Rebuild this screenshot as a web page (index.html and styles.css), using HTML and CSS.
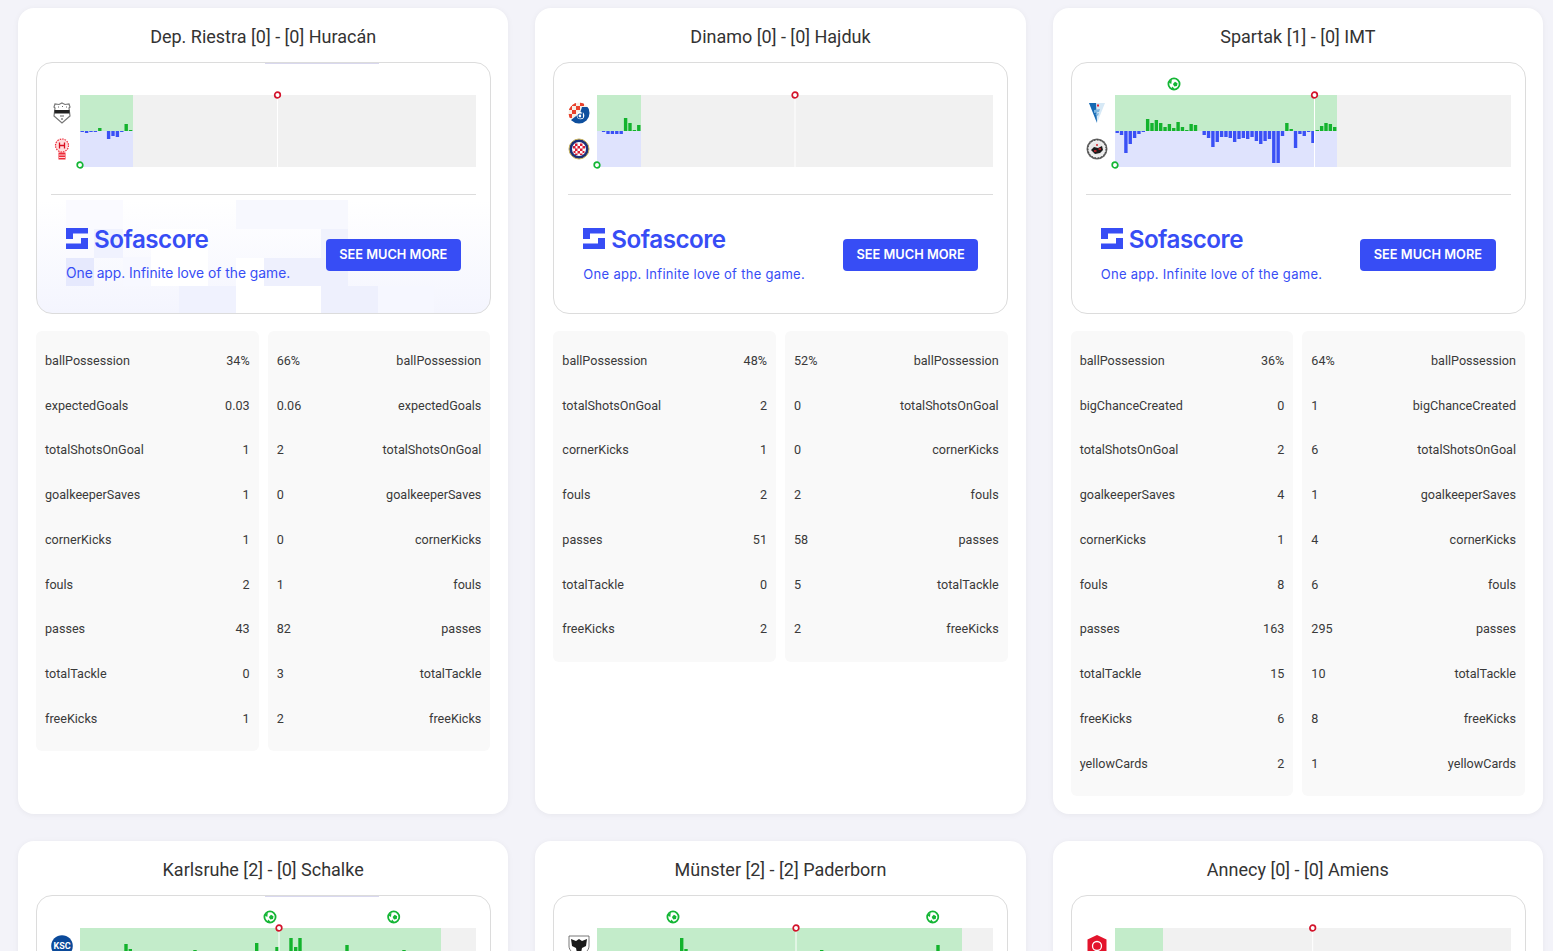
FILE: index.html
```html
<!DOCTYPE html>
<html lang="en">
<head>
  <meta charset="UTF-8" />
  <title>Live matches</title>
  <link rel="stylesheet" href="styles.css">
</head>
<body>
  <svg class="defs" width="0" height="0">
    <symbol id="ball" viewBox="0 0 14 14">
      <circle cx="7" cy="7" r="5.600" fill="#fff" stroke="#14b635" stroke-width="1.800"/>
      <path d="M8 4.800l2.500 1.400-.5 2.900-2.700.5-1.400-2.500z" fill="#14b635"/>
      <path d="M1.800 5.500l2.500 1.500.5-4.500zM4 12l1.500-2.500 2 2.500z" fill="#14b635"/>
    </symbol>
    <symbol id="logo" viewBox="0 0 22 21">
      <path d="M0 0h22v5.500H7V11H0zM22 10v11H0v-5.500h15V10z" fill="#374df5"/>
    </symbol>
    <clipPath id="dinamo-clip"><circle cx="11" cy="11" r="10.500"/></clipPath>
  </svg>

  <main class="page">
    <!-- Dep. Riestra -->
    <article class="card">
      <h2 class="title">Dep. Riestra [0] - [0] Huracán</h2>
      <section class="widget widget-tinted">
        <svg class="tiles" width="455" height="252" viewBox="0 0 455 252">
          <rect x="29" y="137" width="57" height="57" fill="#fafaff"/>
          <rect x="57" y="166" width="29" height="29" fill="#f0f2fe"/>
          <rect x="29" y="195" width="28" height="28" fill="#e6e9fd"/>
          <rect x="86" y="194" width="28" height="29" fill="#f7f8ff"/>
          <rect x="114" y="166" width="57" height="57" fill="#fff"/>
          <rect x="142" y="223" width="57" height="29" fill="#f0f2fe"/>
          <rect x="199" y="195" width="28" height="28" fill="#fff"/>
          <rect x="199" y="223" width="85" height="29" fill="#fff"/>
          <rect x="199" y="137" width="112" height="29" fill="#f7f8fe"/>
          <rect x="227" y="195" width="84" height="28" fill="#eef0fd"/>
          <rect x="284" y="166" width="27" height="29" fill="#f0f2fd"/>
          <rect x="284" y="223" width="57" height="29" fill="#eef0fd"/>
          <rect x="341" y="223" width="56" height="29" fill="#f6f7ff"/>
        </svg>
        <span class="edge-glow"></span>
        <div class="chart-row">
          <div class="crests">
            <svg class="crest" viewBox="0 0 22 22">
              <path d="M11 1l3 1.500 4-.5 1 3-1 1 1 8-8 7-8-7 1-8-1-1 1-3 4 .5z" fill="#fff" stroke="#777" stroke-width="1.200"/>
              <rect x="3.500" y="8" width="15" height="3.500" fill="#222"/>
              <path d="M7 5h1M11 4.500h1M15 5h1M9 14h4M11 16v2" stroke="#666" stroke-width="1.200"/>
            </svg>
            <svg class="crest" viewBox="0 0 22 22">
              <circle cx="11" cy="7.500" r="6.500" fill="#fdd" stroke="#ee2a38" stroke-width="1.200" stroke-dasharray="1.500 1"/>
              <path d="M8.500 4.500v6M13.500 4.500v6M8.500 7.500h5" stroke="#d80f20" stroke-width="1.300" fill="none"/>
              <rect x="7.500" y="14.500" width="7" height="7" fill="#ee2a38"/>
              <path d="M8 17h6M8 19.500h6" stroke="#fff" stroke-width=".8"/>
            </svg>
          </div>
          <svg class="chart" width="396" height="72" viewBox="0 0 396 72">
            <rect class="area-rest" width="396" height="72"/>
            <rect class="area-home" width="53" height="36"/>
            <rect class="area-away" y="36" width="53" height="36"/>
            <path class="bars-away" d="M2.200 36v1m4.400-1v2m4.400-2v1m4.400-1v1m13.200-1v8m4.400-8v5m4.400-5v6m4.400-6v1"/>
            <path class="bars-home" d="M19.800 36v-3M46.200 36v-7m4.400 7v-1"/>
            <path class="half-line" d="M197.500 0v72"/>
            <circle class="ring-start" cx="0" cy="70" r="2.800"/>
            <circle class="ring-half" cx="197.500" cy="0" r="2.800"/>
          </svg>
        </div>
        <div class="promo">
          <div>
            <div class="brand"><svg class="brand-logo"><use href="#logo"/></svg>Sofascore</div>
            <p class="tagline">One app. Infinite love of the game.</p>
          </div>
          <a class="more-btn">SEE MUCH MORE</a>
        </div>
      </section>
      <div class="stats">
        <ul class="panel">
          <li><span>ballPossession</span><span>34%</span></li>
          <li><span>expectedGoals</span><span>0.03</span></li>
          <li><span>totalShotsOnGoal</span><span>1</span></li>
          <li><span>goalkeeperSaves</span><span>1</span></li>
          <li><span>cornerKicks</span><span>1</span></li>
          <li><span>fouls</span><span>2</span></li>
          <li><span>passes</span><span>43</span></li>
          <li><span>totalTackle</span><span>0</span></li>
          <li><span>freeKicks</span><span>1</span></li>
        </ul>
        <ul class="panel">
          <li><span>66%</span><span>ballPossession</span></li>
          <li><span>0.06</span><span>expectedGoals</span></li>
          <li><span>2</span><span>totalShotsOnGoal</span></li>
          <li><span>0</span><span>goalkeeperSaves</span></li>
          <li><span>0</span><span>cornerKicks</span></li>
          <li><span>1</span><span>fouls</span></li>
          <li><span>82</span><span>passes</span></li>
          <li><span>3</span><span>totalTackle</span></li>
          <li><span>2</span><span>freeKicks</span></li>
        </ul>
      </div>
    </article>

    <!-- Dinamo -->
    <article class="card">
      <h2 class="title">Dinamo [0] - [0] Hajduk</h2>
      <section class="widget">
        <div class="chart-row">
          <div class="crests">
            <svg class="crest" viewBox="0 0 22 22">
              <g clip-path="url(#dinamo-clip)">
                <rect width="22" height="22" fill="#f6efe8"/>
                <path d="M4 0h4v4H4zM12 0h4v4h-4zM0 4h4v4H0zM8 4h4v4H8zM4 8h4v4H4zM0 12h4v4H0z" fill="#e8412c"/>
                <path d="M22 5v17H3v-4l9-7 2-6z" fill="#0d4f9e"/>
                <circle cx="12.500" cy="13.500" r="3.800" fill="#fff"/>
                <circle cx="12" cy="14" r="2" fill="none" stroke="#0d4f9e" stroke-width="1.200"/>
                <path d="M14.200 9v7" stroke="#0d4f9e" stroke-width="1.300"/>
              </g>
            </svg>
            <svg class="crest" viewBox="0 0 22 22">
              <circle cx="11" cy="11" r="10" fill="#1d2f78" stroke="#c9b35c" stroke-width="1"/>
              <circle cx="11" cy="11" r="7" fill="#fff"/>
              <path d="M7 5.500h2.500V8H7zM12 5.500h2.500V8H12zM9.500 8H12v2.500H9.500zM14.500 8H17v2.500h-2.500zM5 8h2.500v2.500H5zM7 10.500h2.500V13H7zM12 10.500h2.500V13H12zM9.500 13H12v2.500H9.500zM14.500 13H16.500v2h-2zM5.500 13h2v2h-2zM7 15.500h2.500V17H7zM12 15.500h2.500V17H12z" fill="#d81e34"/>
            </svg>
          </div>
          <svg class="chart" width="396" height="72" viewBox="0 0 396 72">
            <rect class="area-rest" width="396" height="72"/>
            <rect class="area-home" width="44" height="36"/>
            <rect class="area-away" y="36" width="44" height="36"/>
            <path class="bars-away" d="M6.600 36v1m4.400-1v3m4.400-3v3m4.400-3v3m4.400-3v3"/>
            <path class="bars-home" d="M28.600 36v-13m4.400 13v-8m4.400 8v-1m4.400 1v-6"/>
            <path class="half-line" d="M198 0v72"/>
            <circle class="ring-start" cx="0" cy="70" r="2.800"/>
            <circle class="ring-half" cx="198" cy="0" r="2.800"/>
          </svg>
        </div>
        <div class="promo">
          <div>
            <div class="brand"><svg class="brand-logo"><use href="#logo"/></svg>Sofascore</div>
            <p class="tagline">One app. Infinite love of the game.</p>
          </div>
          <a class="more-btn">SEE MUCH MORE</a>
        </div>
      </section>
      <div class="stats">
        <ul class="panel">
          <li><span>ballPossession</span><span>48%</span></li>
          <li><span>totalShotsOnGoal</span><span>2</span></li>
          <li><span>cornerKicks</span><span>1</span></li>
          <li><span>fouls</span><span>2</span></li>
          <li><span>passes</span><span>51</span></li>
          <li><span>totalTackle</span><span>0</span></li>
          <li><span>freeKicks</span><span>2</span></li>
        </ul>
        <ul class="panel">
          <li><span>52%</span><span>ballPossession</span></li>
          <li><span>0</span><span>totalShotsOnGoal</span></li>
          <li><span>0</span><span>cornerKicks</span></li>
          <li><span>2</span><span>fouls</span></li>
          <li><span>58</span><span>passes</span></li>
          <li><span>5</span><span>totalTackle</span></li>
          <li><span>2</span><span>freeKicks</span></li>
        </ul>
      </div>
    </article>

    <!-- Spartak -->
    <article class="card">
      <h2 class="title">Spartak [1] - [0] IMT</h2>
      <section class="widget">
        <div class="chart-row">
          <div class="crests">
            <svg class="crest" viewBox="0 0 22 22">
              <path d="M3 1h16l-8 20z" fill="#d7e9f6"/>
              <path d="M3 1h7l1 20z" fill="#1669b3"/>
              <path d="M8 8l6-1-1 3-5 1zM9 12l4-1-1 3z" fill="#7fb6e0"/>
              <rect x="11" y="2.500" width="2" height="2" fill="#e5232e"/>
            </svg>
            <svg class="crest" viewBox="0 0 22 22">
              <circle cx="11" cy="11" r="10.500" fill="#666"/>
              <circle cx="11" cy="11" r="9" fill="#eee"/>
              <circle cx="11" cy="11" r="9" fill="none" stroke="#333" stroke-width="1" stroke-dasharray="1.500 1.500"/>
              <circle cx="11" cy="11" r="6.500" fill="#e8e8e8"/>
              <path d="M5 12l3-3 4 1 4-2 1 4-3 3-5 1z" fill="#1b1b1b"/>
              <path d="M8 13h2.500M12.500 11h2.500M10 7h2" stroke="#d8242c" stroke-width="1.300"/>
            </svg>
          </div>
          <svg class="chart" width="396" height="72" viewBox="0 0 396 72">
            <rect class="area-rest" width="396" height="72"/>
            <rect class="area-home" width="222" height="36"/>
            <rect class="area-away" y="36" width="222" height="36"/>
            <path class="bars-away" d="M2.200 36v2m4.350-2v4m4.350-4v22m4.350-22v13m4.350-13v7m4.350-7v3m4.350-3v1m60.900-1v4m4.350-4v7m4.350-7v16m4.350-16v11m4.350-11v6m4.350-6v6m4.350-6v7m4.350-7v11m4.350-11v8m4.350-8v7m4.350-7v8m4.350-8v6m4.350-6v10m4.350-10v13m4.350-13v10m4.350-10v8m4.350-8v32m4.350-32v32m4.350-32v5m13.050-5v17m4.350-17v3m4.350-3v5m4.350-5v1m4.350-1v12"/>
            <path class="bars-home" d="M32.650 36v-12m4.350 12v-8m4.350 8v-11m4.350 11v-8m4.350 8v-4m4.350 4v-7m4.350 7v-3m4.350 3v-9m4.350 9v-4m4.350 4v-1m4.350 1v-7m4.350 7v-6m91.350 6v-8m4.350 8v-2m26.100 2v-1m4.350 1v-5m4.350 5v-8m4.350 8v-7m4.350 7v-4"/>
            <path class="half-line" d="M199.500 0v72"/>
            <circle class="ring-start" cx="0" cy="70" r="2.800"/>
            <circle class="ring-half" cx="199.500" cy="0" r="2.800"/>
            <use href="#ball" x="52" y="-18" width="14" height="14"/>
          </svg>
        </div>
        <div class="promo">
          <div>
            <div class="brand"><svg class="brand-logo"><use href="#logo"/></svg>Sofascore</div>
            <p class="tagline">One app. Infinite love of the game.</p>
          </div>
          <a class="more-btn">SEE MUCH MORE</a>
        </div>
      </section>
      <div class="stats">
        <ul class="panel">
          <li><span>ballPossession</span><span>36%</span></li>
          <li><span>bigChanceCreated</span><span>0</span></li>
          <li><span>totalShotsOnGoal</span><span>2</span></li>
          <li><span>goalkeeperSaves</span><span>4</span></li>
          <li><span>cornerKicks</span><span>1</span></li>
          <li><span>fouls</span><span>8</span></li>
          <li><span>passes</span><span>163</span></li>
          <li><span>totalTackle</span><span>15</span></li>
          <li><span>freeKicks</span><span>6</span></li>
          <li><span>yellowCards</span><span>2</span></li>
        </ul>
        <ul class="panel">
          <li><span>64%</span><span>ballPossession</span></li>
          <li><span>1</span><span>bigChanceCreated</span></li>
          <li><span>6</span><span>totalShotsOnGoal</span></li>
          <li><span>1</span><span>goalkeeperSaves</span></li>
          <li><span>4</span><span>cornerKicks</span></li>
          <li><span>6</span><span>fouls</span></li>
          <li><span>295</span><span>passes</span></li>
          <li><span>10</span><span>totalTackle</span></li>
          <li><span>8</span><span>freeKicks</span></li>
          <li><span>1</span><span>yellowCards</span></li>
        </ul>
      </div>
    </article>

    <!-- second row, cut off by the window -->
    <article class="card">
      <h2 class="title">Karlsruhe [2] - [0] Schalke</h2>
      <section class="widget">
        <span class="edge-glow"></span>
        <div class="chart-row">
          <div class="crests">
            <svg class="crest" viewBox="0 0 22 22">
              <circle cx="11" cy="11" r="10.800" fill="#0b4a9a"/>
              <text class="crest-ksc" x="11" y="14">KSC</text>
            </svg>
          </div>
          <svg class="chart" width="396" height="72" viewBox="0 0 396 72">
            <rect class="area-rest" width="396" height="72"/>
            <rect class="area-home" width="361" height="36"/>
            <rect class="area-away" y="36" width="361" height="36"/>
            <path class="bars-home" d="M46 36V16M50.300 36V21M115 36V22M176.700 36V15M197 36V19M211 36V10M215.700 36V19M220 36V10M267 36V17M324 36V22"/>
            <path class="half-line" d="M199 0v72"/>
            <circle class="ring-half" cx="199" cy="0" r="2.800"/>
            <use href="#ball" x="183" y="-18" width="14" height="14"/>
            <use href="#ball" x="306.700" y="-18" width="14" height="14"/>
          </svg>
        </div>
      </section>
    </article>

    <article class="card">
      <h2 class="title">Münster [2] - [2] Paderborn</h2>
      <section class="widget">
        <div class="chart-row">
          <div class="crests">
            <svg class="crest" viewBox="0 0 22 22">
              <path d="M1 1h20v10c0 5-5 8-10 10C6 19 1 16 1 11z" fill="#fff" stroke="#555" stroke-width=".8"/>
              <path d="M3 4l5 2 3-2 3 2 5-2-1 7-4 2-1 5h-4l-1-5-4-2z" fill="#1a1a1a"/>
            </svg>
          </div>
          <svg class="chart" width="396" height="72" viewBox="0 0 396 72">
            <rect class="area-rest" width="396" height="72"/>
            <rect class="area-home" width="365" height="36"/>
            <rect class="area-away" y="36" width="365" height="36"/>
            <path class="bars-home" d="M84.700 36V10M89 36V21M224.700 36V22M341 36V17"/>
            <path class="half-line" d="M199 0v72"/>
            <circle class="ring-half" cx="199" cy="0" r="2.800"/>
            <use href="#ball" x="69" y="-18" width="14" height="14"/>
            <use href="#ball" x="328.700" y="-18" width="14" height="14"/>
          </svg>
        </div>
      </section>
    </article>

    <article class="card">
      <h2 class="title">Annecy [0] - [0] Amiens</h2>
      <section class="widget">
        <div class="chart-row">
          <div class="crests">
            <svg class="crest" viewBox="0 0 22 22">
              <path d="M11 0l9.500 4.500v13L11 22l-9.500-4.500v-13z" fill="#e3142c"/>
              <circle cx="11" cy="11" r="4.500" fill="none" stroke="#fff" stroke-width="1.300"/>
            </svg>
          </div>
          <svg class="chart" width="396" height="72" viewBox="0 0 396 72">
            <rect class="area-rest" width="396" height="72"/>
            <rect class="area-home" width="48" height="36"/>
            <rect class="area-away" y="36" width="48" height="36"/>
            <path class="half-line" d="M197.700 0v72"/>
            <circle class="ring-half" cx="197.700" cy="0" r="2.800"/>
          </svg>
        </div>
      </section>
    </article>
  </main>
</body>
</html>
```

FILE: styles.css
```css
html, body {
  margin: 0;
  height: 100vh;
  overflow: hidden;
}
body {
  background: #f3f3f9;
  color: #333;
  font-family: 'Roboto', sans-serif;
}
.defs {
  position: absolute;
}
.page {
  display: grid;
  grid-template-columns: repeat(3, 1fr);
  gap: 27px;
  align-items: stretch;
  padding: 8px 10px 0 18px;
}
.card {
  background: #fff;
  border-radius: 16px;
  padding: 18px;
  box-shadow: 0 1px 6px rgba(0, 0, 0, 0.05);
}
.title {
  margin: 0 0 14px;
  font-size: 18px;
  font-weight: 400;
  line-height: 22px;
  text-align: center;
  color: #333;
}

/* match widget */
.widget {
  position: relative;
  min-height: 250px;
  margin: 0 -0.5px 17px 0;
  border: 1px solid #dcdcdc;
  border-radius: 16px;
  overflow: hidden;
  background: #fff;
}
.widget-tinted {
  background: linear-gradient(#fff 55%, #f4f5fe 100%);
}
.tiles {
  position: absolute;
  top: 0;
  left: 0;
}
.edge-glow {
  position: absolute;
  top: 0;
  left: 228px;
  width: 114px;
  height: 1px;
  background: #d9d8ee;
}
.chart-row {
  position: relative;
  display: flex;
  padding: 32px 14px 0;
}
.crests {
  flex: 1;
  display: flex;
  flex-direction: column;
  gap: 14px;
  padding-top: 7px;
}
.crest {
  display: block;
  width: 22px;
  height: 22px;
}
.crest-ksc {
  font: 700 9px 'Roboto', sans-serif;
  fill: #fff;
  text-anchor: middle;
}
.chart {
  flex: none;
  overflow: visible;
}
.area-rest { fill: #f1f1f1; }
.area-home { fill: #c3ecca; }
.area-away { fill: #dfe3fd; }
.bars-home, .bars-away {
  fill: none;
  stroke-width: 3.4;
}
.bars-home { stroke: #13b32d; }
.bars-away { stroke: #3a50f5; }
.half-line {
  stroke: #fff;
  stroke-width: 1;
}
.ring-start, .ring-half {
  fill: #fff;
  stroke-width: 1.7;
}
.ring-start { stroke: #14b635; }
.ring-half { stroke: #d3142c; }

/* promo */
.promo {
  position: relative;
  display: flex;
  justify-content: space-between;
  align-items: center;
  margin: 27px 14px 0;
  padding: 33px 15px 29px;
  border-top: 1px solid #dcdcdc;
}
.brand {
  display: flex;
  align-items: center;
  gap: 6px;
  height: 23px;
  font-family: 'Inter', sans-serif;
  font-size: 24.200px;
  font-weight: 600;
  letter-spacing: -0.5px;
  color: #374df5;
}
.brand-logo {
  width: 22px;
  height: 21px;
  margin-bottom: 2px;
}
.tagline {
  margin: 14px 0 0;
  font-family: 'Inter', sans-serif;
  font-size: 13px;
  letter-spacing: 0.3px;
  line-height: 18px;
  color: #374df5;
}
.widget-tinted .tagline {
  margin-top: 13px;
  font-size: 13.800px;
  letter-spacing: 0;
}
.more-btn {
  margin-bottom: 1px;
  padding: 0 13.500px;
  line-height: 32px;
  border-radius: 4px;
  background: #374df5;
  color: #fff;
  font-family: 'Inter', sans-serif;
  font-size: 12.800px;
  font-weight: 600;
  white-space: nowrap;
}

/* stat panels */
.stats {
  display: grid;
  grid-template-columns: repeat(2, 1fr);
  gap: 9px;
  align-items: start;
}
.panel {
  margin: 0;
  padding: 7px 9px 10.500px;
  list-style: none;
  background: #f9f9f9;
  border-radius: 6px;
}
.panel li {
  display: flex;
  justify-content: space-between;
  align-items: center;
  height: 44.750px;
  font-size: 12.600px;
  color: #3a3a3a;
}
```
